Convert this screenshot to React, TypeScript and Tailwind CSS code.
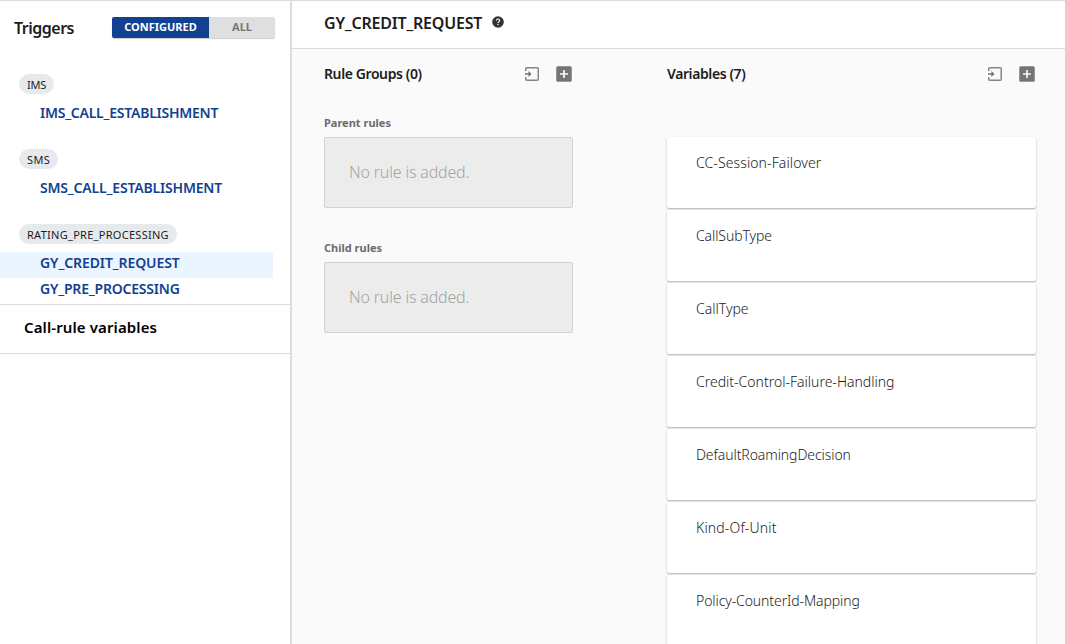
import type { ReactNode } from "react";

const triggerGroups = [
  {
    name: "IMS",
    tracking: "tracking-[-0.2px]",
    items: [{ label: "IMS_CALL_ESTABLISHMENT", tracking: "tracking-[-0.24px]" }],
  },
  {
    name: "SMS",
    tracking: "tracking-[0.35px]",
    items: [{ label: "SMS_CALL_ESTABLISHMENT", tracking: "tracking-[-0.18px]" }],
  },
  {
    name: "RATING_PRE_PROCESSING",
    tracking: "tracking-[0.28px]",
    items: [
      { label: "GY_CREDIT_REQUEST", tracking: "tracking-[-0.1px]" },
      { label: "GY_PRE_PROCESSING", tracking: "tracking-[-0.2px]" },
    ],
  },
];

const variables = [
  { name: "CC-Session-Failover", tracking: "tracking-[0.1px]" },
  { name: "CallSubType", tracking: "tracking-[-0.1px]" },
  { name: "CallType", tracking: "tracking-[0px]" },
  { name: "Credit-Control-Failure-Handling", tracking: "tracking-[0px]" },
  { name: "DefaultRoamingDecision", tracking: "tracking-[-0.08px]" },
  { name: "Kind-Of-Unit", tracking: "tracking-[0.15px]" },
  { name: "Policy-CounterId-Mapping", tracking: "tracking-[-0.1px]" },
];

const selected = "GY_CREDIT_REQUEST";

function ImportIcon() {
  return (
    <svg width="14" height="14" viewBox="0 0 14 14" fill="none" aria-hidden="true">
      <path d="M.75 4V1.75a1 1 0 0 1 1-1h10.5a1 1 0 0 1 1 1v10.5a1 1 0 0 1-1 1H1.75a1 1 0 0 1-1-1V10" stroke="#858585" strokeWidth="1.5" />
      <path d="M0 6.25h3.400V4L6.600 7l-3.200 3V7.750H0z" fill="#757575" />
    </svg>
  );
}

function AddIcon() {
  return (
    <svg width="16" height="16" viewBox="0 0 16 16" aria-hidden="true">
      <rect x=".25" y=".25" width="15.5" height="15.5" rx="1.5" fill="#757575" />
      <path d="M8 4v8M4 8h8" stroke="#fafafa" strokeWidth="1.7" />
    </svg>
  );
}

function HelpIcon() {
  return (
    <svg width="12" height="12" viewBox="0 0 12 12" fill="none" aria-hidden="true">
      <circle cx="6" cy="6" r="5.8" fill="#333" />
      <path d="M4.4 4.6C4.4 3.5 5.1 3 6 3s1.7.5 1.7 1.4C7.7 5.5 6 5.5 6 6.9" stroke="#fff" strokeWidth="1.1" />
      <rect x="5.4" y="7.9" width="1.2" height="1.2" fill="#fff" />
    </svg>
  );
}

function PanelHeader({ children }: { children: ReactNode }) {
  return (
    <div className="flex h-5 items-center justify-between pr-px">
      <h2 className="text-[14px] leading-5 font-semibold tracking-[-0.4px] text-[#1c1c1c]">{children}</h2>
      <div className="flex items-center gap-[17px]">
        <button type="button" aria-label="Import"><ImportIcon /></button>
        <button type="button" aria-label="Add"><AddIcon /></button>
      </div>
    </div>
  );
}

function RuleBox({ title }: { title: string }) {
  return (
    <section>
      <h3 className="text-[11px] leading-4 font-bold text-[#6b6b6b]">{title}</h3>
      <div className="mt-[6px] flex h-[71px] items-center rounded-[2px] border border-[#d2d2d2] bg-[#ececec] pb-0.5 pl-6 text-[16px] font-light tracking-[-0.18px] text-[#a3a3a3]">
        No rule is added.
      </div>
    </section>
  );
}

export default function App() {
  return (
    <div className="flex h-[644px] w-[1065px] overflow-hidden border-t border-[#dcdcdc] bg-white font-['Noto_Sans',sans-serif]">
      <aside className="w-[292px] shrink-0 border-r-2 border-[#dcdcdc]">
        <div className="flex items-center pt-4 pl-[14px]">
          <h1 className="w-[98px] pt-px text-[16px] leading-[20px] font-semibold tracking-[-0.5px] text-[#1c1c1c]">Triggers</h1>
          <div className="flex h-[21px] w-[163px] overflow-hidden rounded-[2px] text-[11px] font-bold shadow-[0_1px_1px_rgba(0,0,0,0.2)]">
            <button type="button" className="w-[97px] bg-[#124191] text-white">CONFIGURED</button>
            <button type="button" className="flex-1 bg-[#dfdfdf] text-[#757575]">ALL</button>
          </div>
        </div>
        <div className="mt-9 flex flex-col gap-[23px]">
          {triggerGroups.map((group) => (
            <div key={group.name}>
              <div className="ml-[19px] flex h-5 w-fit items-center rounded-full bg-[#e6eaed] px-2 pt-0.5 text-[11px] text-[#1c1c1c]">
                <span className={group.tracking}>{group.name}</span>
              </div>
              <ul className={group.items.length > 1 ? "mt-2" : "mt-[6px]"}>
                {group.items.map((item) => (
                  <li
                    key={item.label}
                    className={`flex h-[26px] w-[273px] items-center pl-10 text-[14px] font-semibold text-[#124191] ${group.items.length > 1 ? "pb-1.5" : "pb-0.5"} ${item.label === selected ? "bg-[#ebf5ff]" : ""}`}
                  >
                    <span className={item.tracking}>{item.label}</span>
                  </li>
                ))}
              </ul>
            </div>
          ))}
        </div>
        <div className="flex h-[50px] items-center border-y border-[#dcdcdc] pb-[3px] pl-6 text-[15px] font-semibold tracking-[0.11px] text-black">Call-rule variables</div>
      </aside>
      <main className="flex min-w-0 flex-1 flex-col bg-[#fafafa]">
        <header className="flex h-12 shrink-0 items-center border-b border-[#dcdcdc] bg-white pb-[5px] pl-8">
          <h1 className="w-[168px] pt-px text-[16px] font-semibold tracking-[-0.2px] text-[#1c1c1c]">GY_CREDIT_REQUEST</h1>
          <HelpIcon />
        </header>
        <div className="flex gap-[94px] pt-[15px] pl-8">
          <section className="w-[249px]">
            <PanelHeader>Rule Groups (0)</PanelHeader>
            <div className="mt-[31px] flex flex-col gap-8">
              <RuleBox title="Parent rules" />
              <RuleBox title="Child rules" />
            </div>
          </section>
          <section className="w-[369px]">
            <PanelHeader>Variables (7)</PanelHeader>
            <ul className="mt-[53px] flex flex-col gap-[2px]">
              {variables.map((variable) => (
                <li key={variable.name} className="h-[71px] rounded-[2px] bg-white pt-4 pl-[29px] text-[14px] leading-5 font-light text-[#1c1c1c] shadow-[0_1px_2px_rgba(0,0,0,0.3)]">
                  <span className={variable.tracking}>{variable.name}</span>
                </li>
              ))}
            </ul>
          </section>
        </div>
      </main>
    </div>
  );
}
